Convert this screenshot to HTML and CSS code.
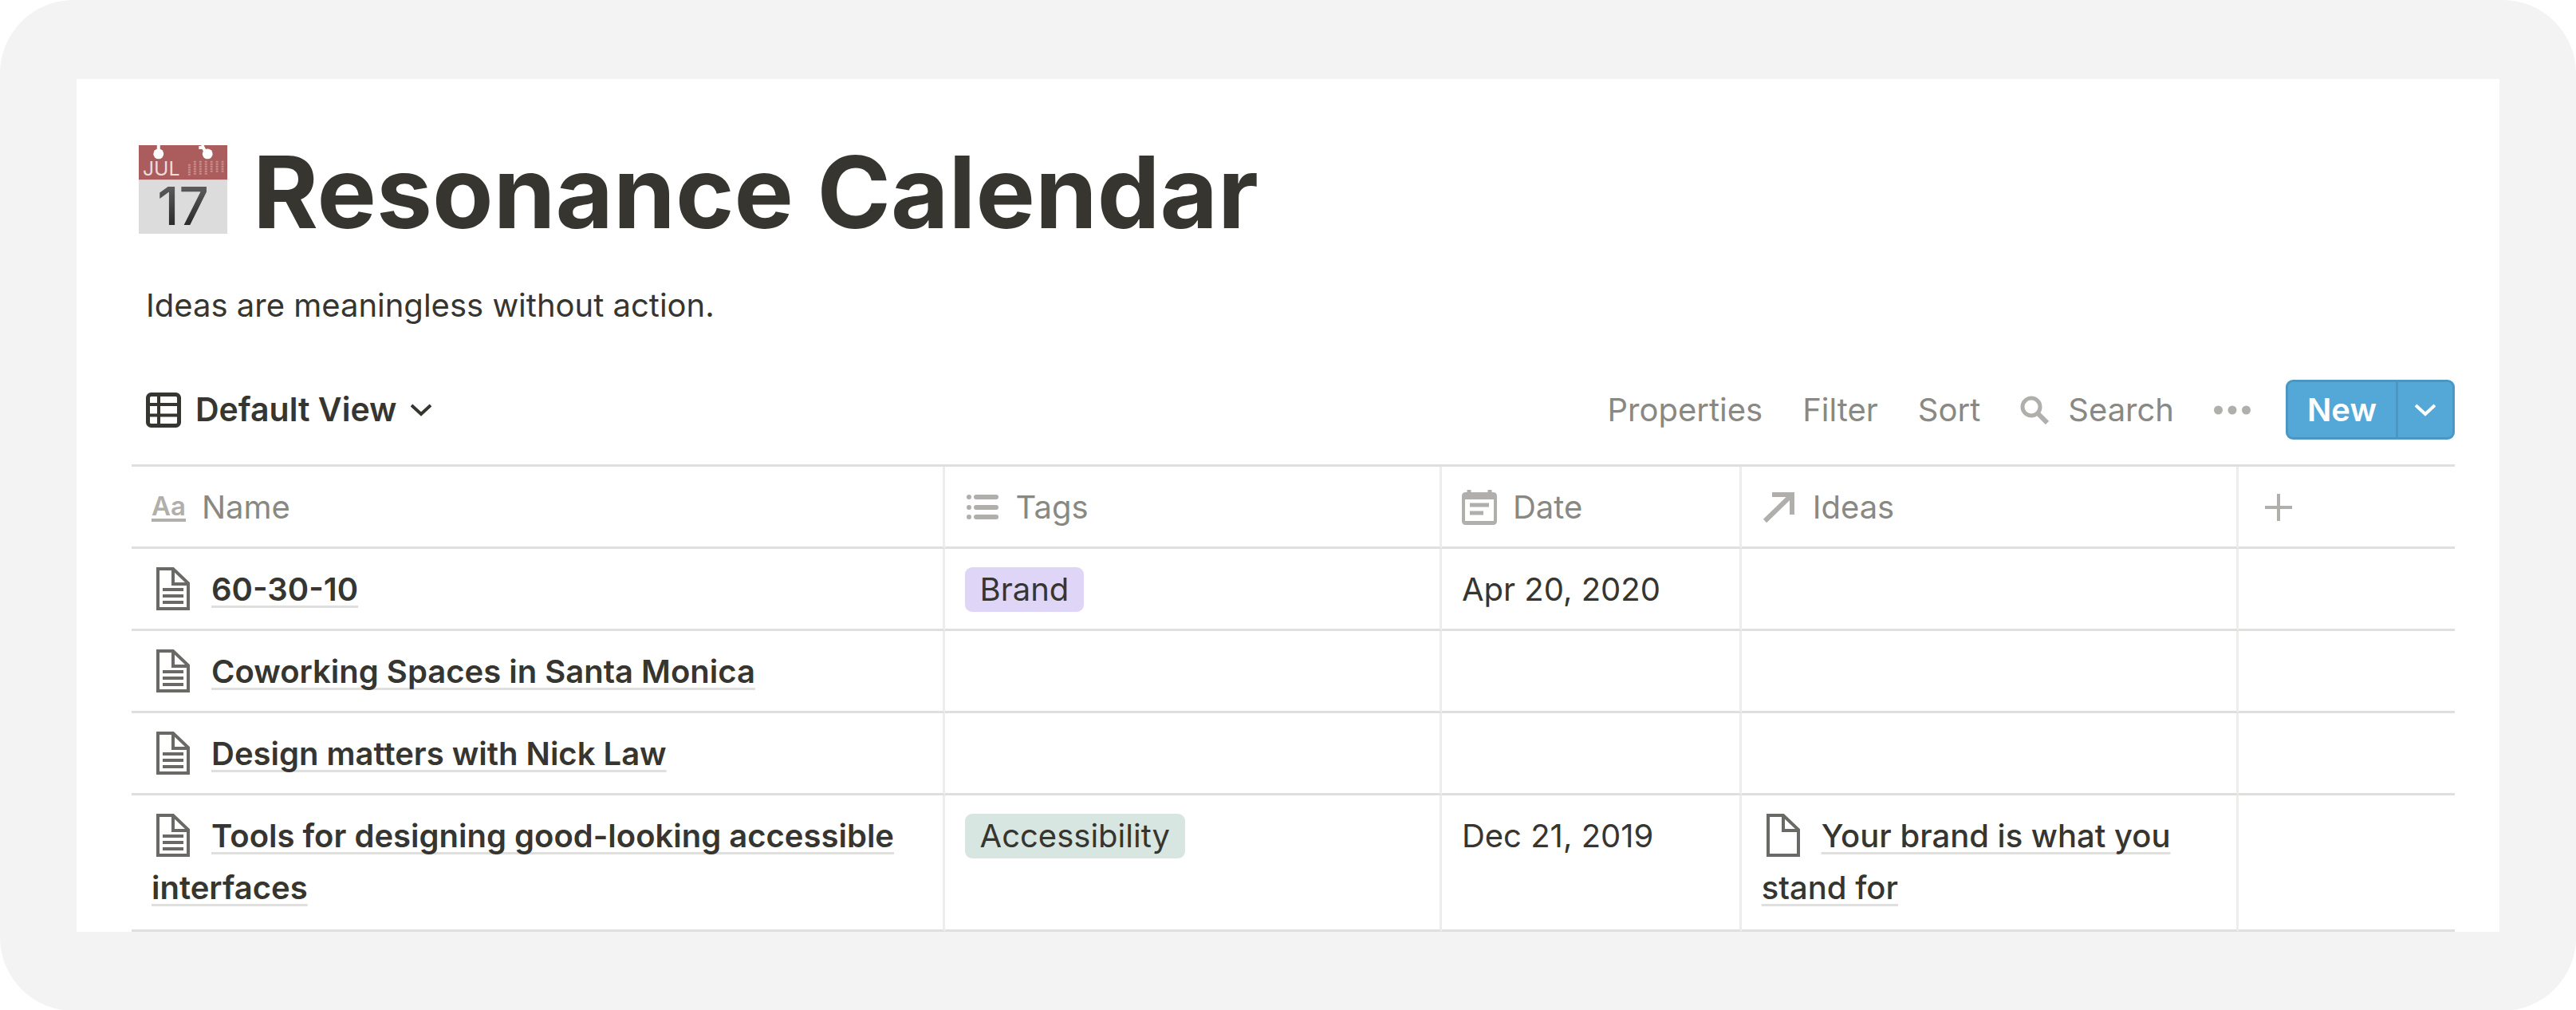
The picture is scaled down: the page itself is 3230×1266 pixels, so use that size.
FILE: index.html
```html
<!DOCTYPE html>
<html lang="en">
<head>
    <meta charset="UTF-8">
    <meta name="viewport" content="width=device-width, initial-scale=1.0">
    <title>Resonance Calendar</title>
    <link rel="stylesheet" href="styles.css">
</head>
<body>
    <!-- shared icons -->
    <svg class="sprite" aria-hidden="true">
        <symbol id="doc" viewBox="0 0 42 54">
            <path d="M2 2H21L40 20V52H2Z M21 2V21H40" fill="none" stroke="#6b6965" stroke-width="4"/>
            <path d="M8 28H34M8 36H34M8 44H34" stroke="#6b6965" stroke-width="4"/>
        </symbol>
        <symbol id="doc-empty" viewBox="0 0 42 54">
            <path d="M2 2H21L40 20V52H2Z M21 2V21H40" fill="none" stroke="#6b6965" stroke-width="4"/>
        </symbol>
        <symbol id="chevron" viewBox="0 0 26 16">
            <path d="M1 2L13 13L25 2" fill="none" stroke="currentColor" stroke-width="4"/>
        </symbol>
    </svg>

    <div class="frame">
        <main class="page">
            <header class="title">
                <svg class="calendar-icon" viewBox="0 0 112 112" role="img" aria-label="Calendar">
                    <defs>
                        <linearGradient id="ink" x1="0" y1="0" x2="0" y2="1">
                            <stop offset="0.2" stop-color="#5a5a5a"/>
                            <stop offset="0.8" stop-color="#2a2a2a"/>
                        </linearGradient>
                    </defs>
                    <rect width="112" height="112" fill="#dcdcdc"/>
                    <rect width="112" height="44" fill="#ab5d5d"/>
                    <path d="M0 44H112" stroke="#e2cccc" stroke-width="1"/>
                    <path d="M25 0V10M80 0L84 8M76 3H82" stroke="#fff" stroke-width="4"/>
                    <circle cx="25" cy="11" r="6.5" fill="#fff"/>
                    <circle cx="87" cy="11" r="6.5" fill="#fff"/>
                    <text class="calendar-month" x="5" y="38">JUL</text>
                    <path d="M64 24V38M71 20V38M78 20V38M85 20V38M92 20V34M99 20V34M106 20V34" stroke="#c98f8f" stroke-width="3" stroke-dasharray="2 1"/>
                    <text class="calendar-day" x="56" y="101" text-anchor="middle">17</text>
                </svg>
                <h1>Resonance Calendar</h1>
            </header>
            <p class="description">Ideas are meaningless without action.</p>

            <div class="toolbar">
                <button type="button" class="view">
                    <svg class="icon-view" viewBox="0 0 44 44">
                        <rect x="2.5" y="2.5" width="39" height="39" rx="4" fill="none" stroke="currentColor" stroke-width="5"/>
                        <path d="M3 15H41M3 28.5H41M16 3V41" stroke="currentColor" stroke-width="4"/>
                    </svg>
                    Default View
                    <svg class="icon-chevron"><use href="#chevron"/></svg>
                </button>
                <div class="actions">
                    <button type="button">Properties</button>
                    <button type="button">Filter</button>
                    <button type="button">Sort</button>
                    <button type="button" class="search">
                        <svg class="icon-search" viewBox="0 0 36 36">
                            <circle cx="14" cy="14" r="11" fill="none" stroke="currentColor" stroke-width="5"/>
                            <path d="M22 22L34 34" stroke="currentColor" stroke-width="6"/>
                        </svg>
                        Search
                    </button>
                    <button type="button" class="more" aria-label="More">
                        <svg class="icon-dots" viewBox="0 0 46 12">
                            <circle cx="5.5" cy="6" r="5.5" fill="currentColor"/>
                            <circle cx="23" cy="6" r="5.5" fill="currentColor"/>
                            <circle cx="40.5" cy="6" r="5.5" fill="currentColor"/>
                        </svg>
                    </button>
                    <div class="new">
                        <button type="button" class="new-main">New</button>
                        <button type="button" class="new-menu" aria-label="New from template">
                            <svg class="icon-chevron"><use href="#chevron"/></svg>
                        </button>
                    </div>
                </div>
            </div>

            <table>
                <colgroup>
                    <col class="col-name">
                    <col class="col-tags">
                    <col class="col-date">
                    <col class="col-ideas">
                    <col>
                </colgroup>
                <thead>
                    <tr>
                        <th>
                            <div class="head"><span class="icon-text">Aa</span>Name</div>
                        </th>
                        <th>
                            <div class="head">
                                <svg viewBox="0 0 44 44">
                                    <path d="M14 9H39M14 22H39M14 34H39" stroke="currentColor" stroke-width="6" stroke-linecap="round"/>
                                    <path d="M5 9H5M5 22H5M5 34H5" stroke="currentColor" stroke-width="6" stroke-linecap="round"/>
                                </svg>
                                Tags
                            </div>
                        </th>
                        <th>
                            <div class="head">
                                <svg viewBox="0 0 44 44">
                                    <path d="M9 0V6M35 0V6" stroke="currentColor" stroke-width="5"/>
                                    <path d="M5 3H39Q44 3 44 8V39Q44 44 39 44H5Q0 44 0 39V8Q0 3 5 3ZM4 12V39H40V12Z" fill="currentColor" fill-rule="evenodd"/>
                                    <path d="M10 19H34M10 29H27" stroke="currentColor" stroke-width="5"/>
                                </svg>
                                Date
                            </div>
                        </th>
                        <th>
                            <div class="head">
                                <svg viewBox="0 0 44 44">
                                    <path d="M4 39L37 7M13 6H41M38 4V31" fill="none" stroke="currentColor" stroke-width="6"/>
                                </svg>
                                Ideas
                            </div>
                        </th>
                        <th>
                            <button type="button" class="add" aria-label="Add property">
                                <svg viewBox="0 0 44 44">
                                    <path d="M8 22H42M25 5V39" stroke="currentColor" stroke-width="4"/>
                                </svg>
                            </button>
                        </th>
                    </tr>
                </thead>
                <tbody>
                    <tr>
                        <td class="name"><svg class="icon-doc"><use href="#doc"/></svg><a href="#">60-30-10</a></td>
                        <td><span class="tag tag-purple">Brand</span></td>
                        <td>Apr 20, 2020</td>
                        <td></td>
                        <td></td>
                    </tr>
                    <tr>
                        <td class="name"><svg class="icon-doc"><use href="#doc"/></svg><a href="#">Coworking Spaces in Santa Monica</a></td>
                        <td></td>
                        <td></td>
                        <td></td>
                        <td></td>
                    </tr>
                    <tr>
                        <td class="name"><svg class="icon-doc"><use href="#doc"/></svg><a href="#">Design matters with Nick Law</a></td>
                        <td></td>
                        <td></td>
                        <td></td>
                        <td></td>
                    </tr>
                    <tr>
                        <td class="name"><svg class="icon-doc"><use href="#doc"/></svg><a href="#">Tools for designing good-looking accessible interfaces</a></td>
                        <td><span class="tag tag-green">Accessibility</span></td>
                        <td>Dec 21, 2019</td>
                        <td><svg class="icon-doc"><use href="#doc-empty"/></svg><a href="#">Your brand is what you stand for</a></td>
                        <td></td>
                    </tr>
                </tbody>
            </table>
        </main>
    </div>
</body>
</html>
```
FILE: styles.css
```css
* {
    box-sizing: border-box;
}

body {
    margin: 0;
    background-color: #fff;
    color: #37352f;
    font-family: Inter, "Liberation Sans", sans-serif;
    font-size: 40px;
    line-height: 65px;
}

.sprite {
    display: none;
}

.frame {
    min-height: 100vh;
    padding: 99px 96px;
    background-color: #f3f3f3;
    border-radius: 92px;
}

.page {
    padding: 67px 56px 0 69px;
    background-color: #fff;
}

/* title */
.title {
    display: flex;
    align-items: center;
    gap: 32px;
    padding-left: 9px;
}

.calendar-icon {
    width: 111px;
    height: 111px;
    margin-bottom: 8px;
    overflow: visible;
}

.calendar-month {
    font-size: 25px;
    fill: #ecdcdc;
}

.calendar-day {
    font-size: 66px;
    font-weight: 500;
    fill: url(#ink);
}

h1 {
    margin: 0;
    font-size: 125px;
    font-weight: 700;
    line-height: 150px;
}

.description {
    margin: 34px 18px 0;
}

/* toolbar */
button {
    display: flex;
    align-items: center;
    padding: 0;
    border: none;
    background: none;
    color: #898883;
    font: inherit;
    cursor: pointer;
}

.toolbar {
    display: flex;
    justify-content: space-between;
    align-items: center;
    margin: 61px 0 31px;
    padding-left: 18px;
}

.view {
    gap: 18px;
    color: #37352f;
    font-size: 41px;
    font-weight: 600;
}

.icon-view {
    width: 44px;
    height: 44px;
}

.icon-chevron {
    width: 26px;
    height: 16px;
}

.actions {
    display: flex;
    align-items: center;
    gap: 50px;
}

.search {
    gap: 24px;
}

.icon-search {
    width: 36px;
    height: 36px;
    color: #b0afac;
}

.more {
    margin-right: -6px;
    color: #b0afac;
}

.icon-dots {
    width: 46px;
    height: 12px;
}

.new {
    display: flex;
    height: 75px;
    border: 3px solid #4b97c3;
    border-radius: 9px;
    background-color: #54a8d8;
}

.new button {
    color: #fff;
    font-weight: 600;
}

.new-main {
    padding: 0 24px;
    border-right: 3px solid #4b97c3;
}

.new-menu {
    padding: 0 21px;
}

/* table */
table {
    width: 100%;
    table-layout: fixed;
    border-top: 3px solid #dfdfde;
    border-spacing: 0;
}

.col-name {
    width: 35%;
}

.col-tags,
.col-ideas {
    width: 21.4%;
}

.col-date {
    width: 12.9%;
}

th,
td {
    padding: 18px 25px 17px;
    border-right: 3px solid #ededec;
    border-bottom: 3px solid #dfdfde;
    text-align: left;
    vertical-align: top;
}

th {
    color: #898883;
    font-weight: 400;
}

th:last-child,
td:last-child {
    border-right: none;
}

tbody tr:last-child td {
    padding-bottom: 20px;
}

.head {
    display: flex;
    align-items: center;
    gap: 20px;
}

th svg {
    width: 44px;
    height: 44px;
    color: #b0afac;
}

.icon-text {
    border-bottom: 4px solid #b0afac;
    color: #b0afac;
    font-size: 33px;
    font-weight: 600;
    line-height: 32px;
}

.add {
    height: 65px;
}

.icon-doc {
    width: 42px;
    height: 54px;
    margin: 0 27px 0 6px;
    vertical-align: -12px;
}

a {
    color: inherit;
    text-decoration: underline 3px #dfdfde;
    text-decoration-skip-ink: none;
    text-underline-offset: 6px;
}

td a {
    font-weight: 500;
}

.name a {
    font-weight: 600;
}

.tag {
    display: inline-block;
    padding: 0 19px;
    border-radius: 9px;
    line-height: 56px;
}

.tag-purple {
    background-color: #dfd5f7;
}

.tag-green {
    background-color: #d7e6e1;
}
```
